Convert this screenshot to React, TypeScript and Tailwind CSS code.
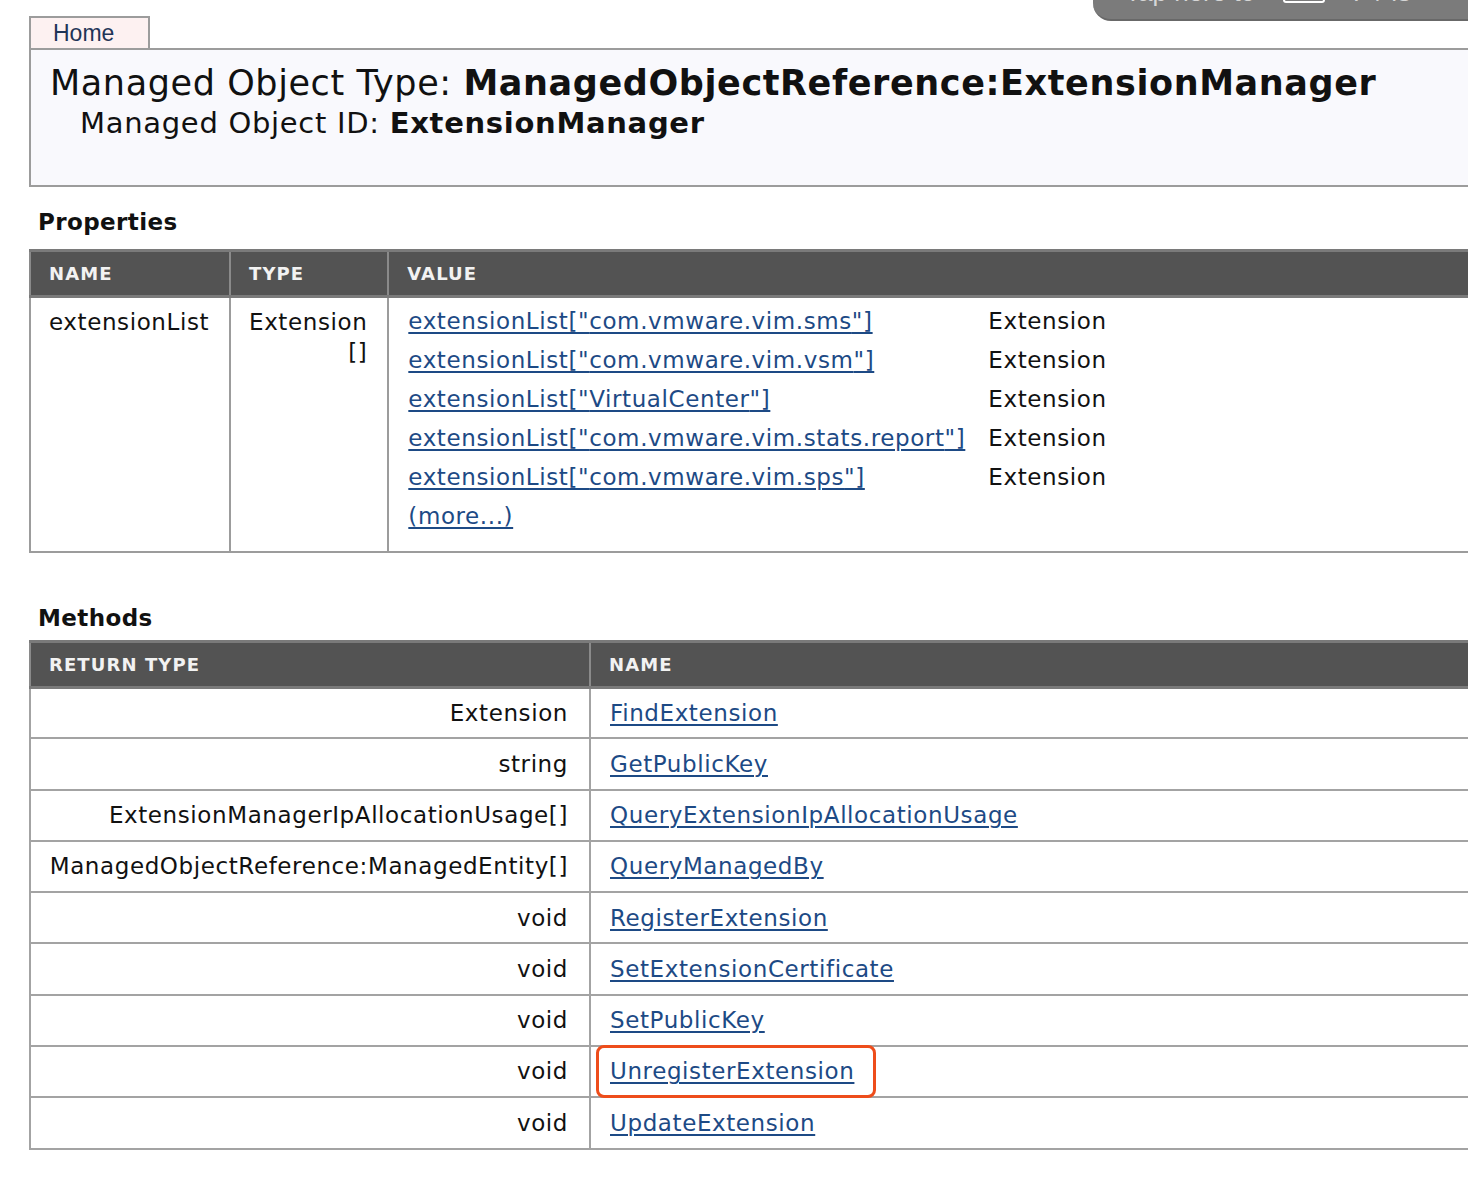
import React from "react";

const font = "font-['DejaVu_Sans','Verdana',sans-serif]";
const link = "text-[#1d4a85] underline underline-offset-[3px] decoration-[1.5px]";

const extensions = [
    "com.vmware.vim.sms",
    "com.vmware.vim.vsm",
    "VirtualCenter",
    "com.vmware.vim.stats.report",
    "com.vmware.vim.sps",
];

const methods: [string, string][] = [
    ["Extension", "FindExtension"],
    ["string", "GetPublicKey"],
    ["ExtensionManagerIpAllocationUsage[]", "QueryExtensionIpAllocationUsage"],
    ["ManagedObjectReference:ManagedEntity[]", "QueryManagedBy"],
    ["void", "RegisterExtension"],
    ["void", "SetExtensionCertificate"],
    ["void", "SetPublicKey"],
    ["void", "UnregisterExtension"],
    ["void", "UpdateExtension"],
];

function HeadCell({ children, className = "" }: { children: React.ReactNode; className?: string }) {
    return (
        <th
            className={`h-[46px] px-[18px] text-left align-middle text-[18px] font-bold uppercase tracking-[1.1px] text-[#f2f2f2] border-x-2 border-[#8a8a8a] ${className}`}
        >
            {children}
        </th>
    );
}

export default function App() {
    return (
        <div className={`relative w-[1468px] h-[1178px] overflow-hidden bg-white text-[#111] ${font}`}>
            {/* floating toolbar, mostly off screen */}
            <div className="absolute top-0 left-[1093px] w-[420px] h-[21px] rounded-bl-[18px] bg-[#7b7b7b] border-b-2 border-[#686868] overflow-hidden">
                <div className="flex items-start gap-[28px] pl-[32px] -mt-[22px] text-[26px] leading-[28px] text-[#d6d6d6] font-['Liberation_Sans',sans-serif]">
                    <span>Tap here to</span>
                    <span className="mt-[3px] inline-block w-[42px] h-[22px] border-2 border-white rounded-[3px]" />
                    <span>F / fs</span>
                </div>
            </div>

            <div className="pl-[29px] pt-[16px]">
                {/* tab */}
                <div className="w-[121px] h-[32px] border-2 border-b-0 border-[#9c9c9c] bg-[#fdf1f1] pl-[22px] text-[23px] leading-[30px] text-[#1f3557] font-['Liberation_Sans',Arial,sans-serif]">
                    Home
                </div>

                {/* header box */}
                <div className="w-[1480px] h-[139px] border-2 border-[#9c9c9c] bg-[#f9f9fd] pl-[19px] pt-[12px]">
                    <div className="text-[35px] leading-[42px] tracking-[0.6px]">
                        Managed Object Type: <b>ManagedObjectReference:ExtensionManager</b>
                    </div>
                    <div className="pl-[30px] text-[29px] leading-[38px] tracking-[0.7px]">
                        Managed Object ID: <b>ExtensionManager</b>
                    </div>
                </div>

                {/* properties */}
                <h2 className="pl-[9px] pt-[20px] h-[62px] text-[23px] font-bold leading-[30px] tracking-[0.4px]">
                    Properties
                </h2>
                <table className="w-[1480px] border-collapse border-2 border-[#9c9c9c] text-[23px] tracking-[0.6px]">
                    <thead>
                        <tr className="bg-[#535353] border-y-[3px] border-y-[#7a7a7a]">
                            <HeadCell className="w-[200px]">Name</HeadCell>
                            <HeadCell className="w-[158px]">Type</HeadCell>
                            <HeadCell>Value</HeadCell>
                        </tr>
                    </thead>
                    <tbody>
                        <tr className="h-[255px] align-top">
                            <td className="border-2 border-[#9c9c9c] px-[18px] pt-[9px] leading-[30px]">extensionList</td>
                            <td className="border-2 border-[#9c9c9c] pl-[18px] pr-[20px] pt-[9px] text-right leading-[30px]">
                                Extension
                                <br />
                                []
                            </td>
                            <td className="border-2 border-[#9c9c9c] pl-[19px] pt-[4px]">
                                <div className="flex flex-col">
                                    {extensions.map((e) => (
                                        <div key={e} className="flex h-[39px] items-center">
                                            <a className={`w-[580px] shrink-0 ${link}`} href="#">
                                                extensionList["{e}"]
                                            </a>
                                            <span>Extension</span>
                                        </div>
                                    ))}
                                    <div className="flex h-[39px] items-center">
                                        <a className={link} href="#">
                                            (more...)
                                        </a>
                                    </div>
                                </div>
                            </td>
                        </tr>
                    </tbody>
                </table>

                {/* methods */}
                <h2 className="pl-[9px] pt-[50px] h-[87px] text-[23px] font-bold leading-[30px] tracking-[0.4px]">
                    Methods
                </h2>
                <table className="w-[1480px] border-collapse border-2 border-[#9c9c9c] text-[23px] tracking-[0.6px]">
                    <thead>
                        <tr className="bg-[#535353] border-y-[3px] border-y-[#7a7a7a]">
                            <HeadCell className="w-[560px]">Return Type</HeadCell>
                            <HeadCell>Name</HeadCell>
                        </tr>
                    </thead>
                    <tbody>
                        {methods.map(([ret, name]) => (
                            <tr key={name} className="h-[51.3px]">
                                <td className="border-2 border-[#a3a3a3] pr-[21px] text-right align-middle">{ret}</td>
                                <td className="border-2 border-[#a3a3a3] pl-[19px] align-middle">
                                    {name === "UnregisterExtension" ? (
                                        <span className="relative">
                                            <a className={link} href="#">
                                                {name}
                                            </a>
                                            <span className="absolute -left-[14px] -right-[22px] -top-[13px] -bottom-[14px] rounded-[8px] border-[3px] border-[#ee4d1b]" />
                                        </span>
                                    ) : (
                                        <a className={link} href="#">
                                            {name}
                                        </a>
                                    )}
                                </td>
                            </tr>
                        ))}
                    </tbody>
                </table>
            </div>
        </div>
    );
}
